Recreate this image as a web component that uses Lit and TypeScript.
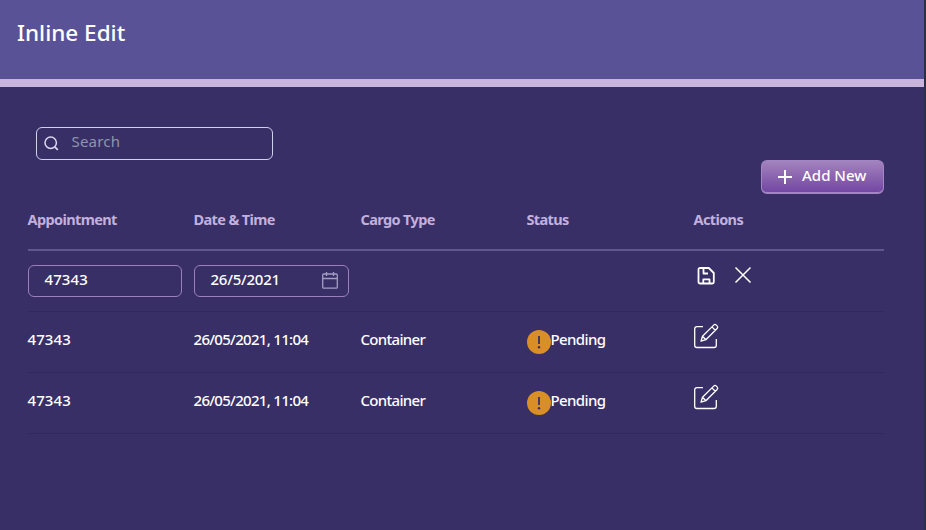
import { LitElement, html, css, svg } from "lit";
import { customElement, property } from "lit/decorators.js";

@customElement("app-icon")
class AppIcon extends LitElement {
  @property() name = "";

  static styles = css`
    :host { display: block; flex: none; }
    svg { display: block; width: 100%; height: 100%; overflow: visible; fill: none; stroke: currentColor; }
  `;

  private shape() {
    switch (this.name) {
      case "search":
        return svg`<circle cx="6.7" cy="6.7" r="5.7" stroke-width="1.5"/><path d="M10.8 10.8 13.8 13.8" stroke-width="1.7"/>`;
      case "plus":
        return svg`<path d="M7 0V14M0 7H14" stroke-width="2"/>`;
      case "calendar":
        return svg`<rect x=".7" y="2" width="14.6" height="14.2" rx="1" stroke-width="1.3"/><path d="M.7 6.5H15.3M4.5 0V4M11.5 0V4" stroke-width="1.3"/>`;
      case "save":
        return svg`<path d="M2.2 1H10.8L15.8 6V15Q15.8 16.5 14.3 16.5H2.2Q.5 16.5 .5 15V2.5Q.5 1 2.2 1ZM5.5 1V6.5H10M5.3 16.5V12.3H11.5V16.5" stroke-width="1.8" stroke-linejoin="round"/>`;
      case "close":
        return svg`<path d="M.5 .5 15.5 15.5M15.5 .5 .5 15.5" stroke-width="1.5"/>`;
      case "edit":
        return svg`<path d="M9 2.7H3Q.7 2.7 .7 5V21.2Q.7 23.5 3 23.5H20Q22.3 23.5 22.3 21.2V15" stroke-width="1.3"/><path d="M7 17.2 8.5 12.3 19.7 1.1Q21 -.2 22.3 1.1L23.1 1.9Q24.4 3.2 23.1 4.5L11.9 15.7ZM8.5 12.3 11.9 15.7M17.9 2.9 21.3 6.3" stroke-width="1.3" stroke-linejoin="round"/>`;
      default:
        return svg`<circle cx="12" cy="12" r="12" fill="#d98e26" stroke="none"/><path d="M12 6V14" stroke="#382e66" stroke-width="1.8"/><circle cx="12" cy="17.2" r="1.2" fill="#382e66" stroke="none"/>`;
    }
  }

  render() {
    return html`<svg>${this.shape()}</svg>`;
  }
}

interface Appointment {
  id: string;
  time: string;
  cargo: string;
  status: string;
}

@customElement("app-root")
class AppRoot extends LitElement {
  static styles = css`
    :host {
      display: block;
      box-sizing: border-box;
      height: 530px;
      border-right: 2px solid #2b3145;
      background: #382f66;
      color: #fff;
      font-family: "Noto Sans", sans-serif;
      font-size: 15px;
      line-height: 20px;
    }
    * { box-sizing: border-box; }
    header { height: 87px; padding: 18px 17px; background: #5a5297; border-bottom: 8px solid #c9b5dc; }
    h1 { margin: 0; font-size: 22.5px; font-weight: 500; line-height: 30px; letter-spacing: 0; }
    main { padding: 40px 40px 0 28px; }
    .search { display: flex; gap: 12.5px; width: 237px; height: 33px; margin-left: 8px; padding: 8px 7px; border: 1px solid #cfd1ea; border-radius: 6px; color: #8f95ac; }
    .search app-icon { width: 15px; height: 15px; color: #dcd9f2; }
    .search span { margin-top: -5px; letter-spacing: 0.2px; }
    .toolbar { display: flex; justify-content: flex-end; }
    .add { display: flex; gap: 10px; width: 123px; height: 34px; padding: 4px 0 0 16px; border: 1px solid #a384c4; border-bottom-width: 2px; border-radius: 6px; background: linear-gradient(#a383bd, #7347a3); color: #fff; font: 500 15px/20px "Noto Sans", sans-serif; letter-spacing: 0; white-space: nowrap; }
    .add app-icon { width: 14px; height: 14px; margin-top: 5px; }
    .row { display: grid; grid-template-columns: 166px 167px 166px 167px 1fr; height: 61px; padding-top: 18px; border-bottom: 1px solid #31285b; font-weight: 500; white-space: nowrap; }
    .row > span { margin: -1px 0 0 -0.5px; }
    .row > .status { margin: 0; }
    .head { height: 57px; padding-top: 16px; border-bottom: 2px solid #62568f; color: #c3b0dd; font-weight: 700; font-size: 14.5px; }
    .editing { padding-top: 14px; }
    .field { display: flex; justify-content: space-between; width: 154px; height: 32px; padding: 3px 10px 0 15.5px; border: 1px solid #9c80bd; border-radius: 6px; }
    .date { width: 155px; letter-spacing: -0.25px; }
    .field app-icon { width: 16px; height: 17px; margin-top: 3px; color: #a39dc2; }
    .actions { display: flex; gap: 20px; padding: 2px 0 0 4px; }
    .actions app-icon { width: 17px; height: 18px; }
    .status { display: flex; }
    .status app-icon { width: 24px; height: 24px; }
    .status .text { margin: -1px 0 0 -0.5px; letter-spacing: -0.6px; }
    .edit { width: 25px; height: 25px; margin-top: -6px; }
    .title { letter-spacing: -0.62px; }
    .datetime { letter-spacing: -0.7px; }
    .cargo { letter-spacing: -0.7px; }
    .number { letter-spacing: 0.1px; }
  `;

  private headings = ["Appointment", "Date & Time", "Cargo Type", "Status", "Actions"];

  private rows: Appointment[] = [
    { id: "47343", time: "26/05/2021, 11:04", cargo: "Container", status: "Pending" },
    { id: "47343", time: "26/05/2021, 11:04", cargo: "Container", status: "Pending" },
  ];

  render() {
    return html`
      <header><h1>Inline Edit</h1></header>
      <main>
        <div class="search"><app-icon name="search"></app-icon><span>Search</span></div>
        <div class="toolbar"><button class="add"><app-icon name="plus"></app-icon><span>Add New</span></button></div>
        <div class="row head">${this.headings.map((h) => html`<span class="title">${h}</span>`)}</div>
        <div class="row editing">
          <div class="field number"><span>47343</span></div>
          <div class="field date"><span>26/5/2021</span><app-icon name="calendar"></app-icon></div>
          <span></span><span></span>
          <div class="actions"><app-icon name="save"></app-icon><app-icon name="close"></app-icon></div>
        </div>
        ${this.rows.map((r) => html`
          <div class="row">
            <span class="number">${r.id}</span>
            <span class="datetime">${r.time}</span>
            <span class="cargo">${r.cargo}</span>
            <span class="status"><app-icon name="warning"></app-icon><span class="text">${r.status}</span></span>
            <app-icon class="edit" name="edit"></app-icon>
          </div>`)}
      </main>
    `;
  }
}
